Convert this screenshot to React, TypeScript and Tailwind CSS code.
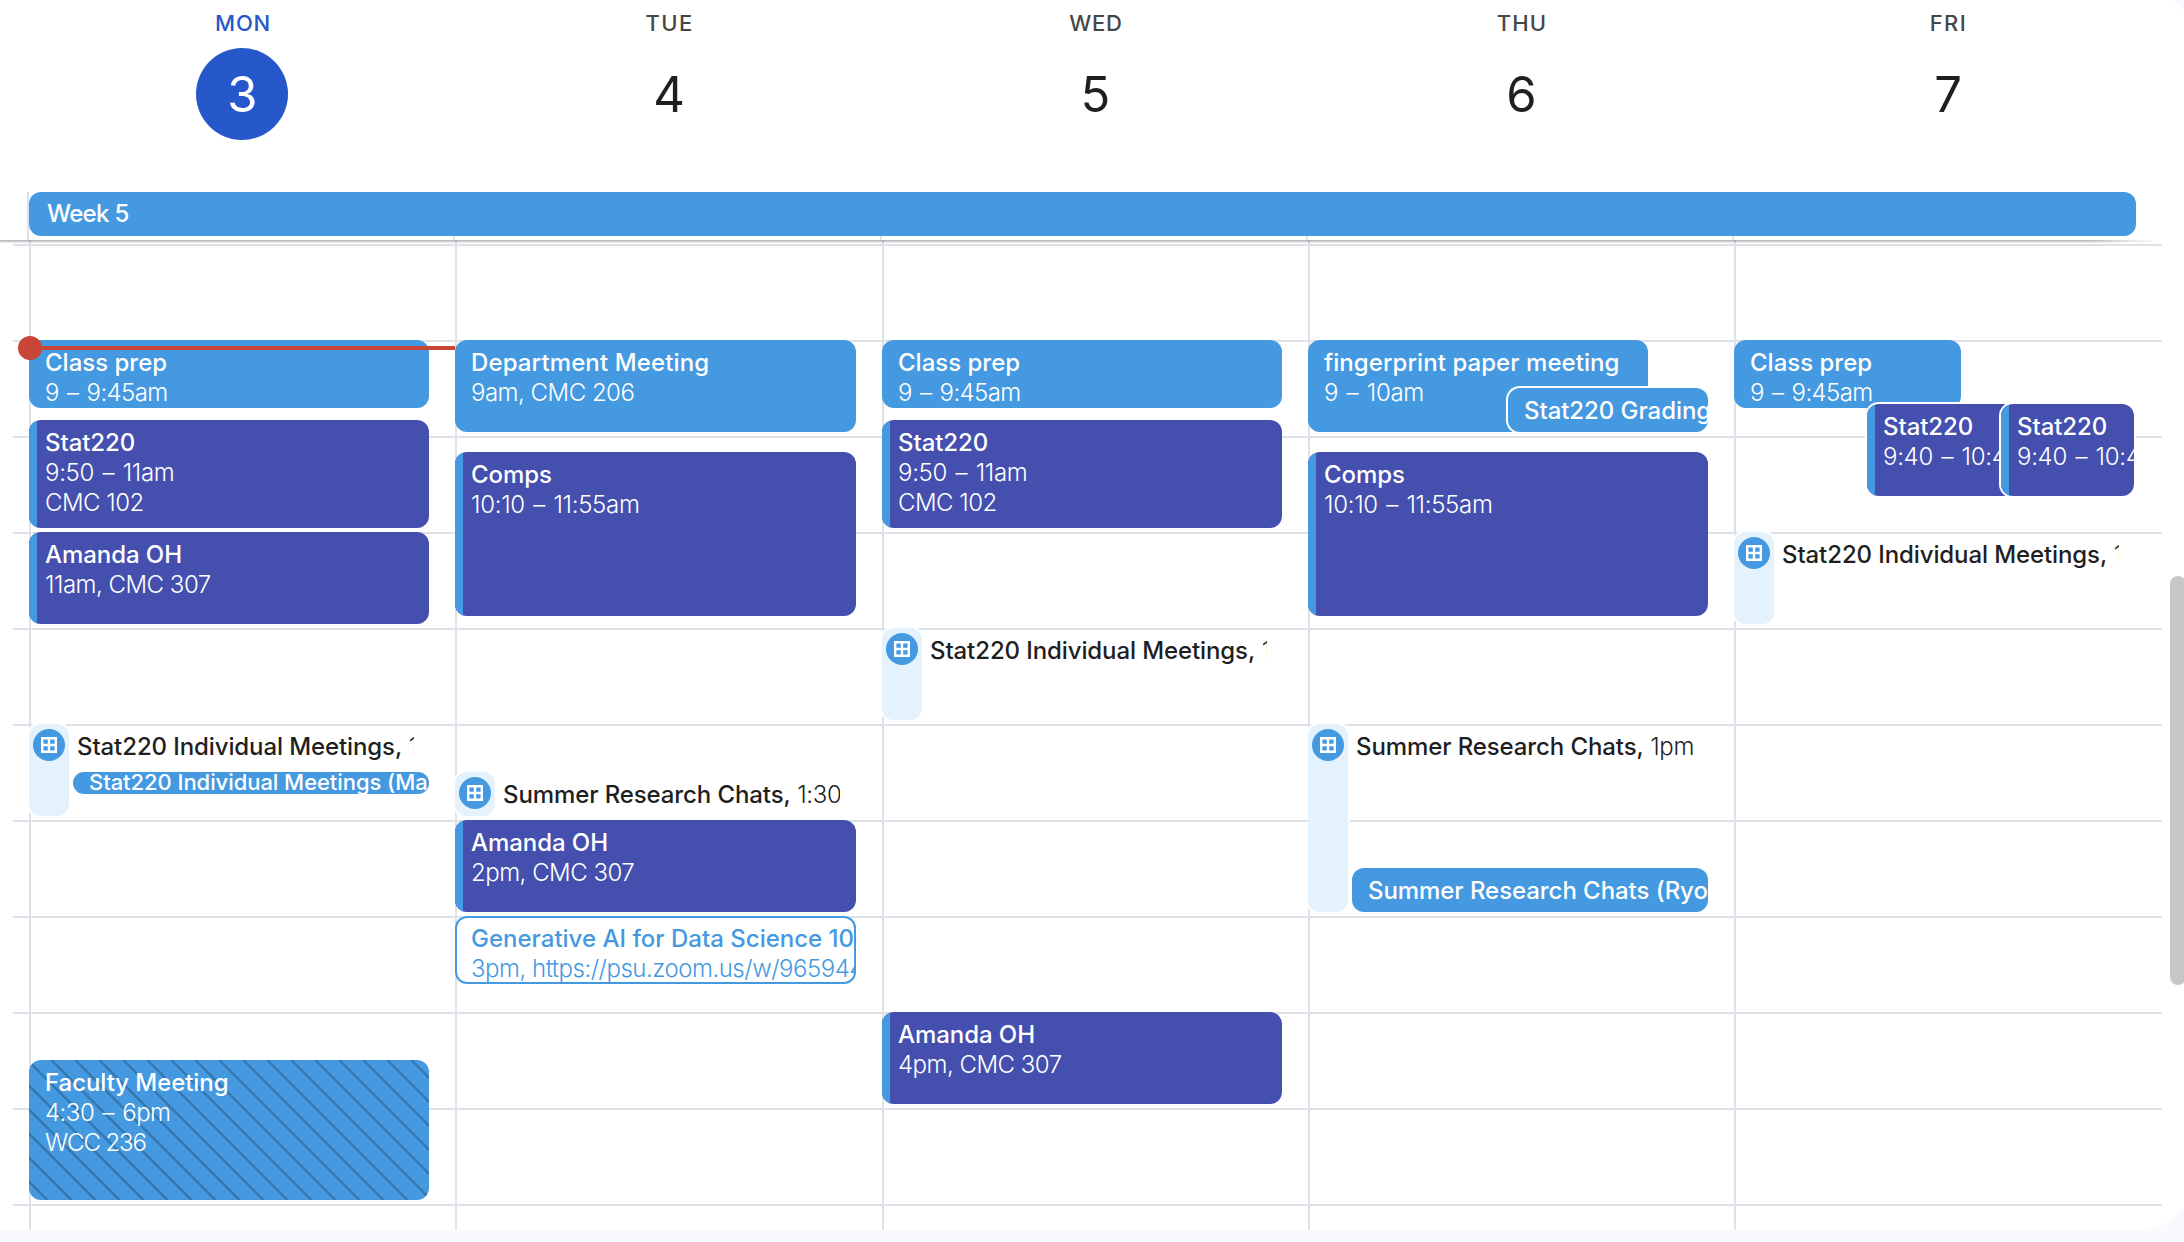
import { clsx } from 'clsx';

const HOUR_PX = 96;
const FIRST_HOUR = 8;

type Line = { text: string; tracking?: string };
type Kind = 'blue' | 'indigo' | 'striped' | 'outlined' | 'slot' | 'mini';

type CalendarEvent = {
  start: number;
  minutes: number;
  kind: Kind;
  title: string;
  titleTracking?: string;
  time?: string;
  lines?: Line[];
  span?: string;
  overlaps?: boolean;
};

type Day = { label: string; labelStyle: string; date: string; today?: boolean; events: CalendarEvent[] };

const days: Day[] = [
  {
    label: 'MON',
    labelStyle: 'tracking-[0.8px]',
    date: '3',
    today: true,
    events: [
      { start: 9, minutes: 45, kind: 'blue', title: 'Class prep', titleTracking: 'tracking-normal', lines: [{ text: '9 – 9:45am', tracking: 'tracking-[-0.6px] [word-spacing:2px]' }] },
      {
        start: 9 + 50 / 60,
        minutes: 70,
        kind: 'indigo',
        title: 'Stat220',
        lines: [
          { text: '9:50 – 11am', tracking: 'tracking-[-0.3px] [word-spacing:2px]' },
          { text: 'CMC 102', tracking: 'tracking-[-0.5px]' },
        ],
      },
      { start: 11, minutes: 60, kind: 'indigo', title: 'Amanda OH', lines: [{ text: '11am, CMC 307' }] },
      { start: 13, minutes: 60, kind: 'slot', title: 'Stat220 Individual Meetings,', time: '1pm' },
      { start: 13.5, minutes: 16.25, kind: 'mini', title: 'Stat220 Individual Meetings (Max)', span: 'left-[44px] w-[356px]' },
      {
        start: 16.5,
        minutes: 90,
        kind: 'striped',
        title: 'Faculty Meeting',
        lines: [
          { text: '4:30 – 6pm', tracking: 'tracking-[-0.5px] [word-spacing:2px]' },
          { text: 'WCC 236', tracking: 'tracking-[-1.1px]' },
        ],
      },
    ],
  },
  {
    label: 'TUE',
    labelStyle: 'tracking-[1.4px]',
    date: '4',
    events: [
      { start: 9, minutes: 60, kind: 'blue', title: 'Department Meeting', titleTracking: 'tracking-[0.12px]', lines: [{ text: '9am, CMC 206' }] },
      { start: 10 + 10 / 60, minutes: 105, kind: 'indigo', title: 'Comps', lines: [{ text: '10:10 – 11:55am', tracking: 'tracking-[-0.3px] [word-spacing:2px]' }] },
      { start: 13.5, minutes: 30, kind: 'slot', title: 'Summer Research Chats,', time: '1:30pm' },
      { start: 14, minutes: 60, kind: 'indigo', title: 'Amanda OH', lines: [{ text: '2pm, CMC 307' }] },
      {
        start: 15,
        minutes: 45,
        kind: 'outlined',
        title: 'Generative AI for Data Science 101',
        titleTracking: 'tracking-normal',
        lines: [{ text: '3pm, https://psu.zoom.us/w/965944', tracking: 'tracking-[-0.48px]' }],
      },
    ],
  },
  {
    label: 'WED',
    labelStyle: 'tracking-[0.8px]',
    date: '5',
    events: [
      { start: 9, minutes: 45, kind: 'blue', title: 'Class prep', titleTracking: 'tracking-normal', lines: [{ text: '9 – 9:45am', tracking: 'tracking-[-0.6px] [word-spacing:2px]' }] },
      {
        start: 9 + 50 / 60,
        minutes: 70,
        kind: 'indigo',
        title: 'Stat220',
        lines: [
          { text: '9:50 – 11am', tracking: 'tracking-[-0.3px] [word-spacing:2px]' },
          { text: 'CMC 102', tracking: 'tracking-[-0.5px]' },
        ],
      },
      { start: 12, minutes: 60, kind: 'slot', title: 'Stat220 Individual Meetings,', time: '12pm' },
      { start: 16, minutes: 60, kind: 'indigo', title: 'Amanda OH', lines: [{ text: '4pm, CMC 307' }] },
    ],
  },
  {
    label: 'THU',
    labelStyle: 'tracking-[1.2px]',
    date: '6',
    events: [
      {
        start: 9,
        minutes: 60,
        kind: 'blue',
        title: 'fingerprint paper meeting',
        titleTracking: 'tracking-[0.06px]',
        lines: [{ text: '9 – 10am', tracking: 'tracking-[-0.3px] [word-spacing:2px]' }],
        span: 'left-0 w-[340px]',
      },
      { start: 9.5, minutes: 30, kind: 'blue', title: 'Stat220 Grading', span: 'left-[200px] w-[200px]', overlaps: true },
      { start: 10 + 10 / 60, minutes: 105, kind: 'indigo', title: 'Comps', lines: [{ text: '10:10 – 11:55am', tracking: 'tracking-[-0.3px] [word-spacing:2px]' }] },
      { start: 13, minutes: 120, kind: 'slot', title: 'Summer Research Chats,', time: '1pm' },
      { start: 14.5, minutes: 30, kind: 'blue', title: 'Summer Research Chats (Ryo)', span: 'left-[44px] w-[356px]' },
    ],
  },
  {
    label: 'FRI',
    labelStyle: 'tracking-[1.5px]',
    date: '7',
    events: [
      {
        start: 9,
        minutes: 45,
        kind: 'blue',
        title: 'Class prep',
        titleTracking: 'tracking-normal',
        lines: [{ text: '9 – 9:45am', tracking: 'tracking-[-0.6px] [word-spacing:2px]' }],
        span: 'left-0 w-[227px]',
      },
      {
        start: 9 + 40 / 60,
        minutes: 60,
        kind: 'indigo',
        title: 'Stat220',
        lines: [{ text: '9:40 – 10:40am', tracking: 'tracking-[-0.3px] [word-spacing:2px]' }],
        span: 'left-[133px] w-[200px]',
        overlaps: true,
      },
      {
        start: 9 + 40 / 60,
        minutes: 60,
        kind: 'indigo',
        title: 'Stat220',
        lines: [{ text: '9:40 – 10:40am', tracking: 'tracking-[-0.3px] [word-spacing:2px]' }],
        span: 'left-[267px] w-[133px]',
        overlaps: true,
      },
      { start: 11, minutes: 60, kind: 'slot', title: 'Stat220 Individual Meetings,', time: '11am' },
    ],
  },
];

const columns = 'grid grid-cols-[426px_427px_426px_426px_427px]';

const kindStyles: Record<Kind, string> = {
  blue: 'bg-[#4599e0] text-white rounded-xl pt-2 pl-4',
  indigo: 'bg-[#444fae] text-white rounded-xl pt-2 pl-4',
  striped:
    'text-white rounded-xl pt-2 pl-4 bg-[#4599e0] bg-[repeating-linear-gradient(45deg,transparent_0px,transparent_11.6px,#3579b3_12px,#3579b3_14px,transparent_14.4px,transparent_16.97px)]',
  outlined: 'bg-white text-[#4599e0] rounded-xl pt-2 pl-4 inset-ring-2 inset-ring-[#4599e0]',
  mini: 'bg-[#4599e0] text-white rounded-full pl-4',
  slot: '',
};

function SlotIcon() {
  return (
    <svg viewBox="0 0 32 32" className="mt-[5px] size-8">
      <circle cx="16" cy="16" r="16" fill="#4599e0" />
      <path fill="#fff" fillRule="evenodd" d="M8 8h16v16H8zM10.4 10.4v4.4h4.4v-4.4zM17.2 10.4v4.4h4.4v-4.4zM10.4 17.2v4.4h4.4v-4.4zM17.2 17.2v4.4h4.4v-4.4z" />
    </svg>
  );
}

function EventBlock({ event }: { event: CalendarEvent }) {
  const box = {
    top: (event.start - FIRST_HOUR) * HOUR_PX + 4,
    height: (event.minutes / 60) * HOUR_PX - 4,
  };

  if (event.kind === 'slot') {
    return (
      <div className="absolute left-0 flex w-[385px]" style={box}>
        <div className="flex w-10 shrink-0 justify-center rounded-xl bg-[#e3f2fc] ring-2 ring-white [clip-path:inset(-2px_-2px_-2px_0)]">
          <SlotIcon />
        </div>
        <div className="flex h-[40px] flex-1 gap-[6.5px] overflow-hidden pt-2 pl-[8px] whitespace-nowrap text-[#1f1f1f]">
          <span className="font-medium tracking-[-0.1px]">{event.title}</span>
          <span className="font-[350] tracking-[-0.3px]">{event.time}</span>
        </div>
      </div>
    );
  }

  return (
    <div
      className={clsx(
        'absolute overflow-hidden whitespace-nowrap',
        event.span ?? 'left-0 right-[26px]',
        kindStyles[event.kind],
        event.overlaps && 'ring-2 ring-white',
      )}
      style={box}
    >
      {event.kind === 'indigo' && <div className="absolute inset-y-0 left-0 w-2 bg-[#4599e0]" />}
      <div className={clsx('font-medium', event.kind === 'mini' ? '-mt-px text-[22px] leading-[22px]' : '', event.titleTracking ?? 'tracking-[-0.06px]')}>
        {event.title}
      </div>
      {event.lines?.map((line) => (
        <div key={line.text} className={clsx('font-[350]', line.tracking ?? 'tracking-[-0.5px]')}>
          {line.text}
        </div>
      ))}
    </div>
  );
}

function DayHeader({ day }: { day: Day }) {
  return (
    <div className="flex flex-col items-center">
      <div className={clsx('mt-[10px] h-[38px] pl-[2px] text-[22px] leading-[26px] font-medium', day.labelStyle, day.today ? 'text-[#2657cb]' : 'text-[#444746]')}>
        {day.label}
      </div>
      <div
        className={clsx(
          'flex size-[92px] items-center justify-center rounded-full pl-px text-[49px] leading-none',
          day.today ? 'bg-[#2657cb] text-white' : 'text-[#1f1f1f]',
        )}
      >
        {day.date}
      </div>
    </div>
  );
}

export default function App() {
  return (
    <div className="h-[1242px] w-full overflow-hidden bg-[#f8fafd] font-[Inter,sans-serif] text-[24px] leading-[30px]">
      <div className="-mt-[11px] h-[1241px] w-[2195px] overflow-hidden rounded-r-[56px] bg-white pt-[11px]">
        <header className="flex h-[240px] flex-col">
          <div className={clsx(columns, 'h-[192px] pl-[29px]')}>
            {days.map((day) => (
              <DayHeader key={day.label} day={day} />
            ))}
          </div>
          <div className="grid h-12 pl-[27px]">
            <div className={clsx(columns, '[grid-area:1/1]')}>
              {days.map((day) => (
                <div key={day.label} className="border-l-2 border-[#dde1e8]" />
              ))}
            </div>
            <div className="ml-[2px] h-11 w-[2107px] rounded-xl bg-[#4599e0] pt-[7px] pl-[18px] font-medium tracking-[-0.7px] text-white [grid-area:1/1]">
              Week 5
            </div>
          </div>
        </header>

        <main className="relative grid h-[990px] overflow-hidden">
          <div className="ml-[13px] w-[2149px] pt-1 [grid-area:1/1]">
            {Array.from({ length: 11 }, (_, i) => (
              <div key={i} className="h-24 border-t-2 border-[#dde1e8]" />
            ))}
          </div>
          <div className={clsx(columns, 'pl-[29px] [grid-area:1/1]')}>
            {days.map((day) => (
              <section key={day.label} className="relative">
                <div className="h-full border-l-2 border-[#dde1e8]" />
                {day.events.map((event, i) => (
                  <EventBlock key={i} event={event} />
                ))}
                {day.today && (
                  <div className="absolute top-[96px] -left-[11px] flex w-[437px] items-center">
                    <div className="size-6 rounded-full bg-[#c94536]" />
                    <div className="-ml-1 h-1 flex-1 bg-[#c94536]" />
                  </div>
                )}
              </section>
            ))}
          </div>
          <div className="absolute top-0 left-0 h-[3px] w-[2158px] bg-linear-to-b from-black/30 to-black/5 [mask-image:linear-gradient(to_right,black_97%,transparent)]" />
          <div className="absolute top-[336px] left-[2170px] h-[409px] w-4 rounded-full bg-[#c6c6c6]" />
        </main>
      </div>
    </div>
  );
}
